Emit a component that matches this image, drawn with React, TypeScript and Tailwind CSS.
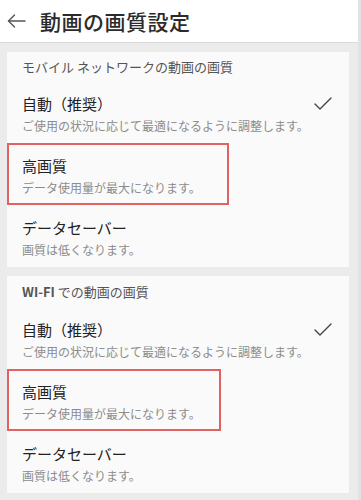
import type { ReactNode } from "react";

interface QualityOption {
  title: string;
  description: string;
  selected?: boolean;
  highlightWidth?: string;
}

interface QualitySection {
  heading: ReactNode;
  headerClass: string;
  options: QualityOption[];
}

const font = { fontFamily: '"Noto Sans CJK JP", "Noto Sans", sans-serif' };

const sections: QualitySection[] = [
  {
    heading: "モバイル ネットワークの動画の画質",
    headerClass: "h-[29px] pt-[6px]",
    options: [
      { title: "自動（推奨）", description: "ご使用の状況に応じて最適になるように調整します。", selected: true },
      { title: "高画質", description: "データ使用量が最大になります。", highlightWidth: "w-[222px]" },
      { title: "データセーバー", description: "画質は低くなります。" },
    ],
  },
  {
    heading: (
      <>
        <span className="font-semibold">WI-FI</span> での動画の画質
      </>
    ),
    headerClass: "h-[31px] pt-[7px]",
    options: [
      { title: "自動（推奨）", description: "ご使用の状況に応じて最適になるように調整します。", selected: true },
      { title: "高画質", description: "データ使用量が最大になります。", highlightWidth: "w-[214px]" },
      { title: "データセーバー", description: "画質は低くなります。" },
    ],
  },
];

function BackArrow() {
  return (
    <svg width="19" height="14" viewBox="0 0 19 14" fill="none" stroke="#555" strokeWidth="1.4" strokeLinecap="round" strokeLinejoin="round">
      <path d="M18 7H1.5" />
      <path d="M7.5 1L1.5 7l6 6" />
    </svg>
  );
}

function Check() {
  return (
    <svg width="18" height="13" viewBox="0 0 18 13" fill="none" stroke="#444" strokeWidth="1.4" strokeLinecap="round" strokeLinejoin="round">
      <path d="M1 7l5 5L17 1" />
    </svg>
  );
}

function OptionRow({ option }: { option: QualityOption }) {
  return (
    <div className="relative flex h-[62px] items-start justify-between pl-[15px] pr-[17px] pt-[12px]">
      <div>
        <p className="text-[15px] leading-[22px] text-[#222]">{option.title}</p>
        <p className="mt-[2px] text-[12px] leading-[18px] text-[#8c8c8c]">{option.description}</p>
      </div>
      {option.selected && (
        <div className="mt-[4px]">
          <Check />
        </div>
      )}
      {option.highlightWidth && (
        <div className={`absolute left-0 top-0 bottom-0 border-2 border-[#e26161] ${option.highlightWidth}`} />
      )}
    </div>
  );
}

export default function App() {
  return (
    <div className="flex h-[500px] w-[361px] overflow-hidden bg-[#ebebeb]" style={font}>
      <div className="flex-1">
        <header className="flex h-[43px] items-center gap-[14px] border-b border-[#dadada] bg-white pl-[7px]">
          <BackArrow />
          <h1 className="text-[21px] font-medium leading-none tracking-[0.5px] text-[#2b2b2b]">動画の画質設定</h1>
        </header>

        <main className="flex flex-col gap-[9px] pl-[7px] pr-[9px] pt-[9px]">
          {sections.map((section, i) => (
            <section key={i} className="bg-[#fafafa]">
              <p className={`pl-[15px] text-[13px] leading-[18px] text-[#555] ${section.headerClass}`}>{section.heading}</p>
              {section.options.map((option) => (
                <OptionRow key={option.title} option={option} />
              ))}
            </section>
          ))}
        </main>
      </div>
      <div className="w-[3px] bg-[#e2e2e2]" />
    </div>
  );
}
